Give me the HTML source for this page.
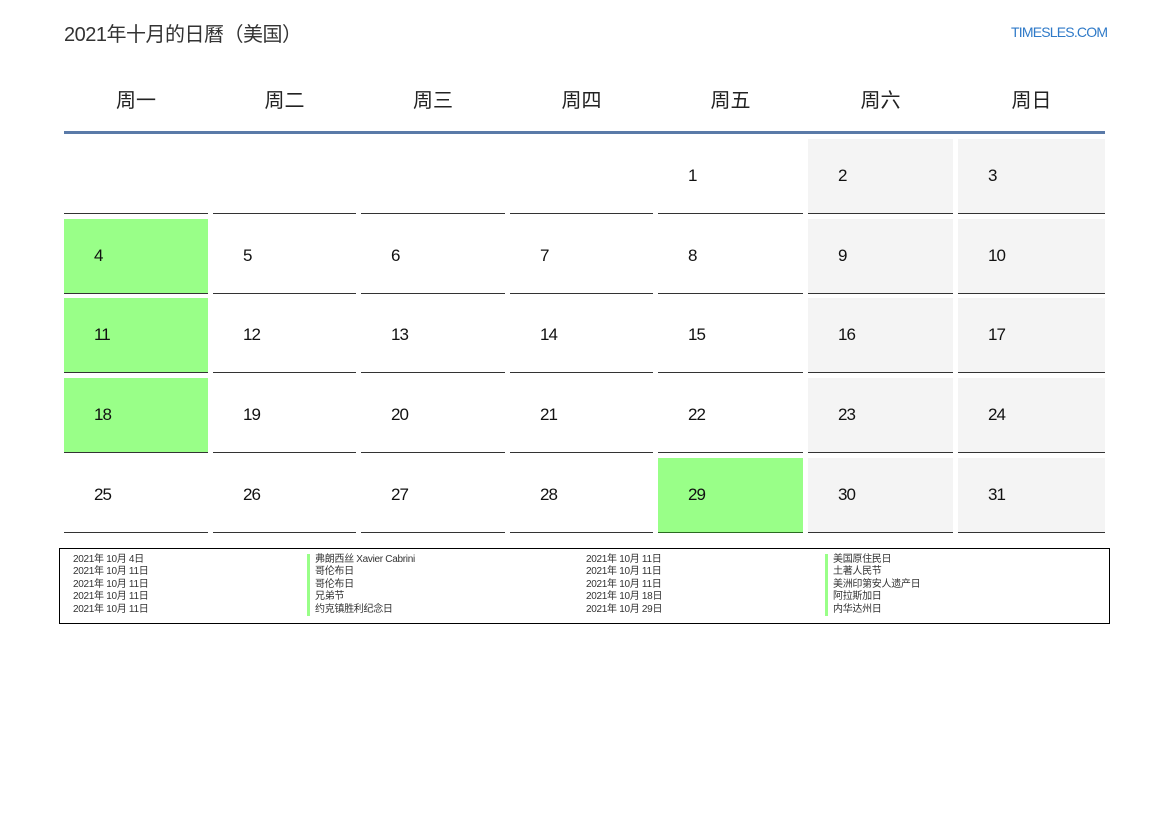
<!DOCTYPE html><html><head><meta charset="utf-8"><style>
body{margin:0;width:1169px;height:827px;background:#fff;position:relative;font-family:"Liberation Sans","Noto Sans CJK SC",sans-serif;overflow:hidden}
.a{position:absolute}
.h{position:absolute;top:84px;font-size:20px;color:#222;text-align:center}
.c{position:absolute;height:74px;border-bottom:1px solid #333;box-sizing:content-box}
.c span{position:absolute;left:30px;top:27px;font-size:17px;color:#111;letter-spacing:-1px}
.g{background:#99ff88}.w{background:#f4f4f4}
.l{position:absolute;font-size:10px;color:#333;line-height:12.4px;white-space:pre;letter-spacing:-0.3px}
.b{border-left:3px solid #99ff88;padding-left:5px}
</style></head><body>
<div class="a" style="left:64px;top:18px;font-size:20px;color:#333;letter-spacing:-0.5px">2021年十月的日曆（美国）</div>
<div class="a" style="left:1011px;top:24px;font-size:14px;color:#2f7ac8;letter-spacing:-0.8px">TIMESLES.COM</div>
<div class="h" style="left:64px;width:144px">周一</div>
<div class="h" style="left:213px;width:143px">周二</div>
<div class="h" style="left:361px;width:144px">周三</div>
<div class="h" style="left:510px;width:143px">周四</div>
<div class="h" style="left:658px;width:145px">周五</div>
<div class="h" style="left:808px;width:145px">周六</div>
<div class="h" style="left:958px;width:147px">周日</div>
<div class="a" style="left:64px;top:131px;width:1041px;height:3px;background:#5a7aa8"></div>

<div class="c" style="left:64px;top:139px;width:144px"></div>
<div class="c" style="left:213px;top:139px;width:143px"></div>
<div class="c" style="left:361px;top:139px;width:144px"></div>
<div class="c" style="left:510px;top:139px;width:143px"></div>
<div class="c" style="left:658px;top:139px;width:145px"><span>1</span></div>
<div class="c w" style="left:808px;top:139px;width:145px"><span>2</span></div>
<div class="c w" style="left:958px;top:139px;width:147px"><span>3</span></div>

<div class="c g" style="left:64px;top:219px;width:144px"><span>4</span></div>
<div class="c" style="left:213px;top:219px;width:143px"><span>5</span></div>
<div class="c" style="left:361px;top:219px;width:144px"><span>6</span></div>
<div class="c" style="left:510px;top:219px;width:143px"><span>7</span></div>
<div class="c" style="left:658px;top:219px;width:145px"><span>8</span></div>
<div class="c w" style="left:808px;top:219px;width:145px"><span>9</span></div>
<div class="c w" style="left:958px;top:219px;width:147px"><span>10</span></div>

<div class="c g" style="left:64px;top:298px;width:144px"><span>11</span></div>
<div class="c" style="left:213px;top:298px;width:143px"><span>12</span></div>
<div class="c" style="left:361px;top:298px;width:144px"><span>13</span></div>
<div class="c" style="left:510px;top:298px;width:143px"><span>14</span></div>
<div class="c" style="left:658px;top:298px;width:145px"><span>15</span></div>
<div class="c w" style="left:808px;top:298px;width:145px"><span>16</span></div>
<div class="c w" style="left:958px;top:298px;width:147px"><span>17</span></div>

<div class="c g" style="left:64px;top:378px;width:144px"><span>18</span></div>
<div class="c" style="left:213px;top:378px;width:143px"><span>19</span></div>
<div class="c" style="left:361px;top:378px;width:144px"><span>20</span></div>
<div class="c" style="left:510px;top:378px;width:143px"><span>21</span></div>
<div class="c" style="left:658px;top:378px;width:145px"><span>22</span></div>
<div class="c w" style="left:808px;top:378px;width:145px"><span>23</span></div>
<div class="c w" style="left:958px;top:378px;width:147px"><span>24</span></div>

<div class="c" style="left:64px;top:458px;width:144px"><span>25</span></div>
<div class="c" style="left:213px;top:458px;width:143px"><span>26</span></div>
<div class="c" style="left:361px;top:458px;width:144px"><span>27</span></div>
<div class="c" style="left:510px;top:458px;width:143px"><span>28</span></div>
<div class="c g" style="left:658px;top:458px;width:145px;border-color:#2a6a20"><span>29</span></div>
<div class="c w" style="left:808px;top:458px;width:145px"><span>30</span></div>
<div class="c w" style="left:958px;top:458px;width:147px"><span>31</span></div>

<div class="a" style="left:59px;top:548px;width:1049px;height:74px;border:1px solid #000"></div>
<div class="l" style="left:73px;top:554px">2021年 10月 4日
2021年 10月 11日
2021年 10月 11日
2021年 10月 11日
2021年 10月 11日</div>
<div class="l" style="left:307px;top:554px"><div class="b">弗朗西丝 Xavier Cabrini</div><div class="b">哥伦布日</div><div class="b">哥伦布日</div><div class="b">兄弟节</div><div class="b">约克镇胜利纪念日</div></div>
<div class="l" style="left:586px;top:554px">2021年 10月 11日
2021年 10月 11日
2021年 10月 11日
2021年 10月 18日
2021年 10月 29日</div>
<div class="l" style="left:825px;top:554px"><div class="b">美国原住民日</div><div class="b">土著人民节</div><div class="b">美洲印第安人遗产日</div><div class="b">阿拉斯加日</div><div class="b">内华达州日</div></div>
</body></html>
